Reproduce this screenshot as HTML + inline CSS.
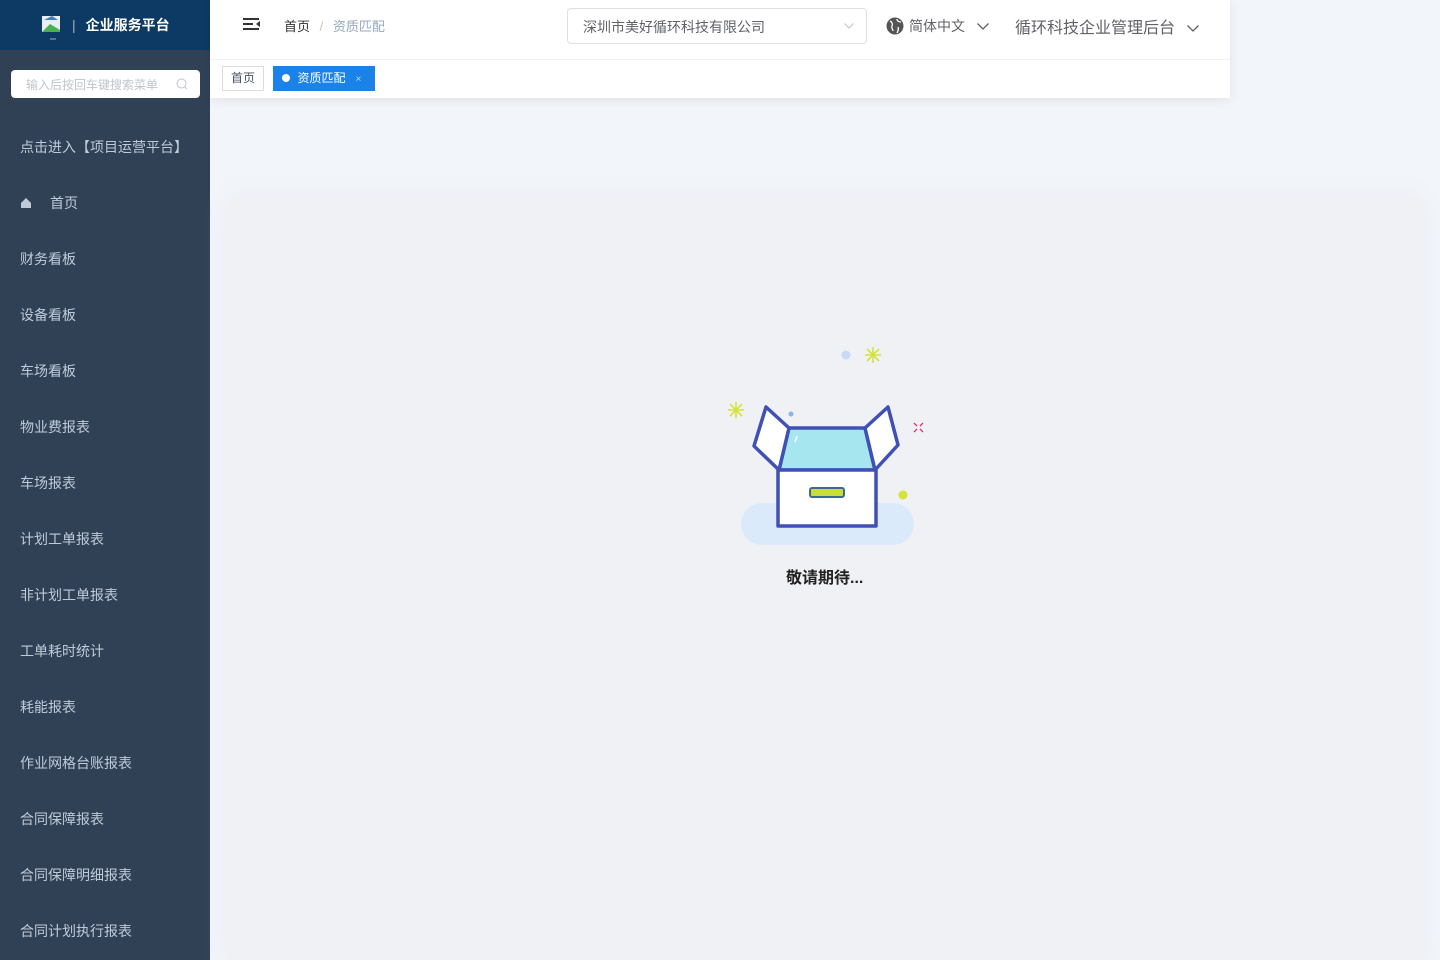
<!DOCTYPE html>
<html style="height:960px;overflow:hidden"><head><meta charset="utf-8"><style>
*{margin:0;padding:0;box-sizing:border-box}
body{width:1440px;height:960px;overflow:hidden;background:#f2f5fa;font-family:"Liberation Sans","Noto Sans CJK SC",sans-serif;position:relative}
.side{position:absolute;left:0;top:0;width:210px;height:960px;background:#304156}
.logo{height:50px;background:#0d3a64;display:flex;align-items:center;padding-left:40px;color:#fff;font-size:14px;font-weight:bold}
.search{position:absolute;left:11px;top:70px;width:189px;height:28px;background:#fff;border-radius:4px;font-size:12px;color:#c0c4cc;padding:6px 0 0 15px}
.menu{position:absolute;left:0;top:119px;width:210px}
.menu div{height:56px;line-height:56px;padding-left:20px;color:#bfcbd9;font-size:14px}
.top{position:absolute;left:210px;top:0;width:1020px;height:98px;background:#fff;box-shadow:0 2px 10px rgba(0,0,0,.08)}
.nav{height:60px;position:relative;border-bottom:1px solid #f0f0f0}
.tabs{position:absolute;top:66px;left:12px}
.panel{position:absolute;left:226px;top:195px;width:1198px;height:765px;background:#f0f1f5;border-radius:18px 18px 0 0;box-shadow:0 0 20px rgba(230,232,240,.6)}
.chev{display:inline-block;vertical-align:middle}
</style></head><body>
<div class="side">
 <div class="logo"><svg width="24" height="30" viewBox="0 0 24 30" style="margin-right:8px"><rect x="2" y="6" width="18" height="16" fill="#e8eef5"/><path d="M2 22 L10 14 L20 20 L20 22Z" fill="#4caf50"/><path d="M4 10l8-4 6 4" fill="#3f7fbf"/><line x1="10" y1="29" x2="16" y2="29" stroke="#aaa"/></svg><span style="color:#aab;margin-right:10px;font-weight:normal">|</span>企业服务平台</div>
 <div class="search">输入后按回车键搜索菜单<svg style="position:absolute;right:12px;top:8px" width="12" height="12" viewBox="0 0 12 12"><circle cx="5.5" cy="5.5" r="4.5" fill="none" stroke="#c0c4cc"/><path d="M9 9l2 2" stroke="#c0c4cc"/></svg></div>
 <div class="menu">
  <div>点击进入【项目运营平台】</div>
  <div><svg width="12" height="12" viewBox="0 0 12 12" style="margin-right:18px;vertical-align:-1px"><path d="M1 6L6 1 11 6V11H1Z" fill="#bfcbd9"/></svg>首页</div>
  <div>财务看板</div><div>设备看板</div><div>车场看板</div><div>物业费报表</div><div>车场报表</div><div>计划工单报表</div><div>非计划工单报表</div><div>工单耗时统计</div><div>耗能报表</div><div>作业网格台账报表</div><div>合同保障报表</div><div>合同保障明细报表</div><div>合同计划执行报表</div>
 </div>
</div>
<div class="top">
 <div class="nav">
  <svg style="position:absolute;left:33px;top:17px" width="18" height="16" viewBox="0 0 18 16"><path d="M0 2h16M0 7h10M0 12h16" stroke="#333" stroke-width="2"/><path d="M17 4l-4 3 4 3z" fill="#333"/></svg>
  <div style="position:absolute;left:74px;top:16px;font-size:13px;color:#303133">首页 <span style="color:#c0c4cc;margin:0 6px">/</span> <span style="color:#97a8be">资质匹配</span></div>
  <div style="position:absolute;left:357px;top:8px;width:300px;height:36px;border:1px solid #dcdfe6;border-radius:4px;font-size:14px;color:#606266;padding:8px 0 0 15px">深圳市美好循环科技有限公司<svg style="position:absolute;right:12px;top:14px" width="10" height="6" viewBox="0 0 10 6"><path d="M0.5 0.5L5 5 9.5 0.5" fill="none" stroke="#c0c4cc"/></svg></div>
  <div style="position:absolute;left:676px;top:16px;font-size:14px;color:#606266;display:flex;align-items:center"><svg width="18" height="18" viewBox="0 0 18 18" style="margin-right:5px"><circle cx="9" cy="9" r="8.5" fill="#555"/><path d="M4 4c2 1 3 3 2 5s1 3 1 5M11 2c0 2 2 3 4 3M12 10c1 2 0 4-1 6" stroke="#fff" stroke-width="1.3" fill="none"/></svg>简体中文<svg class="chev" style="margin-left:12px" width="12" height="7" viewBox="0 0 12 7"><path d="M0.5 0.5L6 6 11.5 0.5" fill="none" stroke="#606266" stroke-width="1.3"/></svg></div>
  <div style="position:absolute;left:805px;top:14px;font-size:16px;color:#606266">循环科技企业管理后台<svg class="chev" style="margin-left:12px" width="12" height="7" viewBox="0 0 12 7"><path d="M0.5 0.5L6 6 11.5 0.5" fill="none" stroke="#606266" stroke-width="1.3"/></svg></div>
 </div>
 <div class="tabs">
  <span style="display:inline-block;height:25px;line-height:23px;border:1px solid #d8dce5;padding:0 8px;font-size:12px;color:#495060">首页</span>
  <span style="display:inline-block;height:25px;line-height:25px;background:#1a82e8;padding:0 14px 0 9px;font-size:12px;color:#fff;margin-left:5px"><span style="display:inline-block;width:8px;height:8px;border-radius:50%;background:#fff;margin-right:7px"></span>资质匹配<span style="margin-left:10px;font-size:10px;opacity:.7">×</span></span>
 </div>
</div>
<div class="panel"></div>
<svg style="position:absolute;left:720px;top:340px" width="210" height="220" viewBox="0 0 210 220">
 <rect x="21" y="163" width="173" height="42" rx="21" fill="#dbeafb"/>
 <circle cx="126" cy="15" r="4.5" fill="#c5dbf8"/>
 <circle cx="71" cy="74" r="2.5" fill="#8fb3e8"/>
 <circle cx="183" cy="155" r="4.5" fill="#d4e33a"/>
 <g stroke="#d4e33a" stroke-width="1.6"><path d="M153 7v16M145 15h16M147 9l12 12M159 9l-12 12"/><path d="M16 62v16M8 70h16M10 64l12 12M22 64l-12 12"/></g>
 <g stroke="#e0306a" stroke-width="1.3"><path d="M194 83l3 3M203 83l-3 3M194 92l3-3M203 92l-3-3"/></g>
 <path d="M69 88 L145 88 L155 130 L59 130Z" fill="#a6e6ef" stroke="#3f51b5" stroke-width="3.5" stroke-linejoin="round"/>
 <path d="M69 88 L46 67 L34 106 L59 130Z" fill="#fff" stroke="#3f51b5" stroke-width="3.5" stroke-linejoin="round"/>
 <path d="M145 88 L168 67 L178 105 L155 130Z" fill="#fff" stroke="#3f51b5" stroke-width="3.5" stroke-linejoin="round"/>
 <rect x="58" y="130" width="98" height="56" fill="#fff" stroke="#3f51b5" stroke-width="3.5" stroke-linejoin="round"/>
 <rect x="90" y="148" width="34" height="9" rx="2" fill="#c8dd35" stroke="#3f6a8f" stroke-width="2"/>
 <path d="M77 96l-2 6" stroke="#fff" stroke-width="1.5"/>
</svg>
<div style="position:absolute;left:786px;top:564px;font-size:16px;font-weight:bold;color:#222">敬请期待...</div>
</body></html>
